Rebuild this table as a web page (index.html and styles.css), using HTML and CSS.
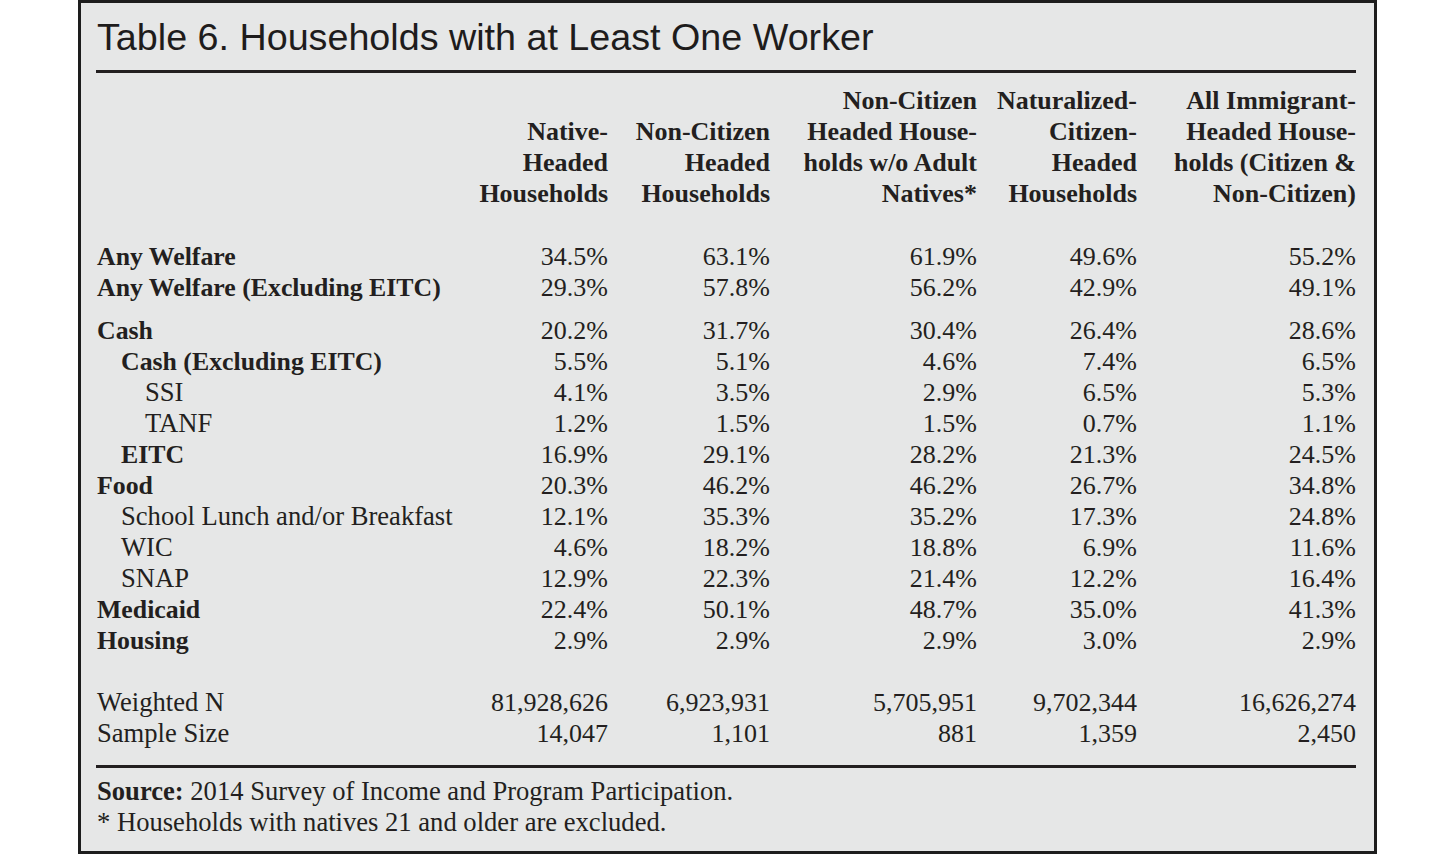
FILE: index.html
```html
<!DOCTYPE html>
<html lang="en">
<head>
<meta charset="utf-8">
<title>Table 6. Households with at Least One Worker</title>
<link rel="stylesheet" href="styles.css">
</head>
<body>
<div class="frame">
  <h1 class="title">Table 6. Households with at Least One Worker</h1>
  <div class="rule"></div>
  <table class="data">
    <colgroup>
      <col class="c-label">
      <col class="c1">
      <col class="c2">
      <col class="c3">
      <col class="c4">
      <col class="c5">
    </colgroup>
    <thead>
      <tr>
        <th></th>
        <th>Native-<br>Headed<br>Households</th>
        <th>Non-Citizen<br>Headed<br>Households</th>
        <th>Non-Citizen<br>Headed House-<br>holds w/o Adult<br>Natives*</th>
        <th>Naturalized-<br>Citizen-<br>Headed<br>Households</th>
        <th>All Immigrant-<br>Headed House-<br>holds (Citizen &amp;<br>Non-Citizen)</th>
      </tr>
    </thead>
    <tbody>
      <tr class="first"><td class="b">Any Welfare</td><td>34.5%</td><td>63.1%</td><td>61.9%</td><td>49.6%</td><td>55.2%</td></tr>
      <tr><td class="b">Any Welfare (Excluding EITC)</td><td>29.3%</td><td>57.8%</td><td>56.2%</td><td>42.9%</td><td>49.1%</td></tr>
      <tr class="gap-sm"><td class="b">Cash</td><td>20.2%</td><td>31.7%</td><td>30.4%</td><td>26.4%</td><td>28.6%</td></tr>
      <tr><td class="b ind1">Cash (Excluding EITC)</td><td>5.5%</td><td>5.1%</td><td>4.6%</td><td>7.4%</td><td>6.5%</td></tr>
      <tr><td class="r ind2">SSI</td><td>4.1%</td><td>3.5%</td><td>2.9%</td><td>6.5%</td><td>5.3%</td></tr>
      <tr><td class="r ind2">TANF</td><td>1.2%</td><td>1.5%</td><td>1.5%</td><td>0.7%</td><td>1.1%</td></tr>
      <tr><td class="b ind1">EITC</td><td>16.9%</td><td>29.1%</td><td>28.2%</td><td>21.3%</td><td>24.5%</td></tr>
      <tr><td class="b">Food</td><td>20.3%</td><td>46.2%</td><td>46.2%</td><td>26.7%</td><td>34.8%</td></tr>
      <tr><td class="r ind1">School Lunch and/or Breakfast</td><td>12.1%</td><td>35.3%</td><td>35.2%</td><td>17.3%</td><td>24.8%</td></tr>
      <tr><td class="r ind1">WIC</td><td>4.6%</td><td>18.2%</td><td>18.8%</td><td>6.9%</td><td>11.6%</td></tr>
      <tr><td class="r ind1">SNAP</td><td>12.9%</td><td>22.3%</td><td>21.4%</td><td>12.2%</td><td>16.4%</td></tr>
      <tr><td class="b">Medicaid</td><td>22.4%</td><td>50.1%</td><td>48.7%</td><td>35.0%</td><td>41.3%</td></tr>
      <tr><td class="b">Housing</td><td>2.9%</td><td>2.9%</td><td>2.9%</td><td>3.0%</td><td>2.9%</td></tr>
      <tr class="gap-lg"><td class="r">Weighted N</td><td>81,928,626</td><td>6,923,931</td><td>5,705,951</td><td>9,702,344</td><td>16,626,274</td></tr>
      <tr><td class="r">Sample Size</td><td>14,047</td><td>1,101</td><td>881</td><td>1,359</td><td>2,450</td></tr>
    </tbody>
  </table>
  <div class="rule rule-bottom"></div>
  <div class="notes">
    <p><strong>Source:</strong> 2014 Survey of Income and Program Participation.</p>
    <p>* Households with natives 21 and older are excluded.</p>
  </div>
</div>
</body>
</html>
```

FILE: styles.css
```css
html, body {
  margin: 0;
  padding: 0;
  background: #ffffff;
}

.frame {
  box-sizing: border-box;
  margin-left: 78px;
  width: 1299px;
  height: 854px;
  border: 3px solid #1d1d1d;
  background: #e6e7e7;
  padding: 14px 18px 0 15px;
  color: #231f20;
}

.title {
  margin: 0;
  font-family: "Liberation Sans", Arial, sans-serif;
  font-weight: normal;
  font-size: 37.7px;
  line-height: 40px;
  height: 40px;
  padding-left: 1px;
  color: #1e1c1c;
}

.rule {
  height: 3px;
  background: #231f20;
  margin-top: 13px;
}

.data {
  width: 1260px;
  table-layout: fixed;
  border-collapse: collapse;
  font-family: "Liberation Serif", "Times New Roman", serif;
  font-size: 26px;
  line-height: 31px;
  margin-top: 12px;
}

.c-label { width: 362px; }
.c1 { width: 150px; }
.c2 { width: 162px; }
.c3 { width: 207px; }
.c4 { width: 160px; }
.c5 { width: 219px; }

.data th,
.data td {
  padding: 0;
  text-align: right;
  vertical-align: bottom;
  white-space: nowrap;
}

.data th {
  font-weight: bold;
}

.data td:first-child {
  text-align: left;
  padding-left: 1px;
}

.data .b {
  font-weight: bold;
  font-size: 25.8px;
}

.data .r {
  font-size: 26.6px;
}

.data td.ind1 {
  padding-left: 25px;
}

.data td.ind2 {
  padding-left: 49px;
}

.data tr.first td {
  padding-top: 32px;
}

.data tr.gap-sm td {
  padding-top: 12px;
}

.data tr.gap-lg td {
  padding-top: 31px;
}

.rule-bottom {
  margin-top: 16px;
}

.notes {
  margin-top: 8px;
  font-family: "Liberation Serif", "Times New Roman", serif;
  font-size: 26.6px;
  line-height: 31px;
}

.notes p {
  margin: 0;
  padding-left: 1px;
}
```
